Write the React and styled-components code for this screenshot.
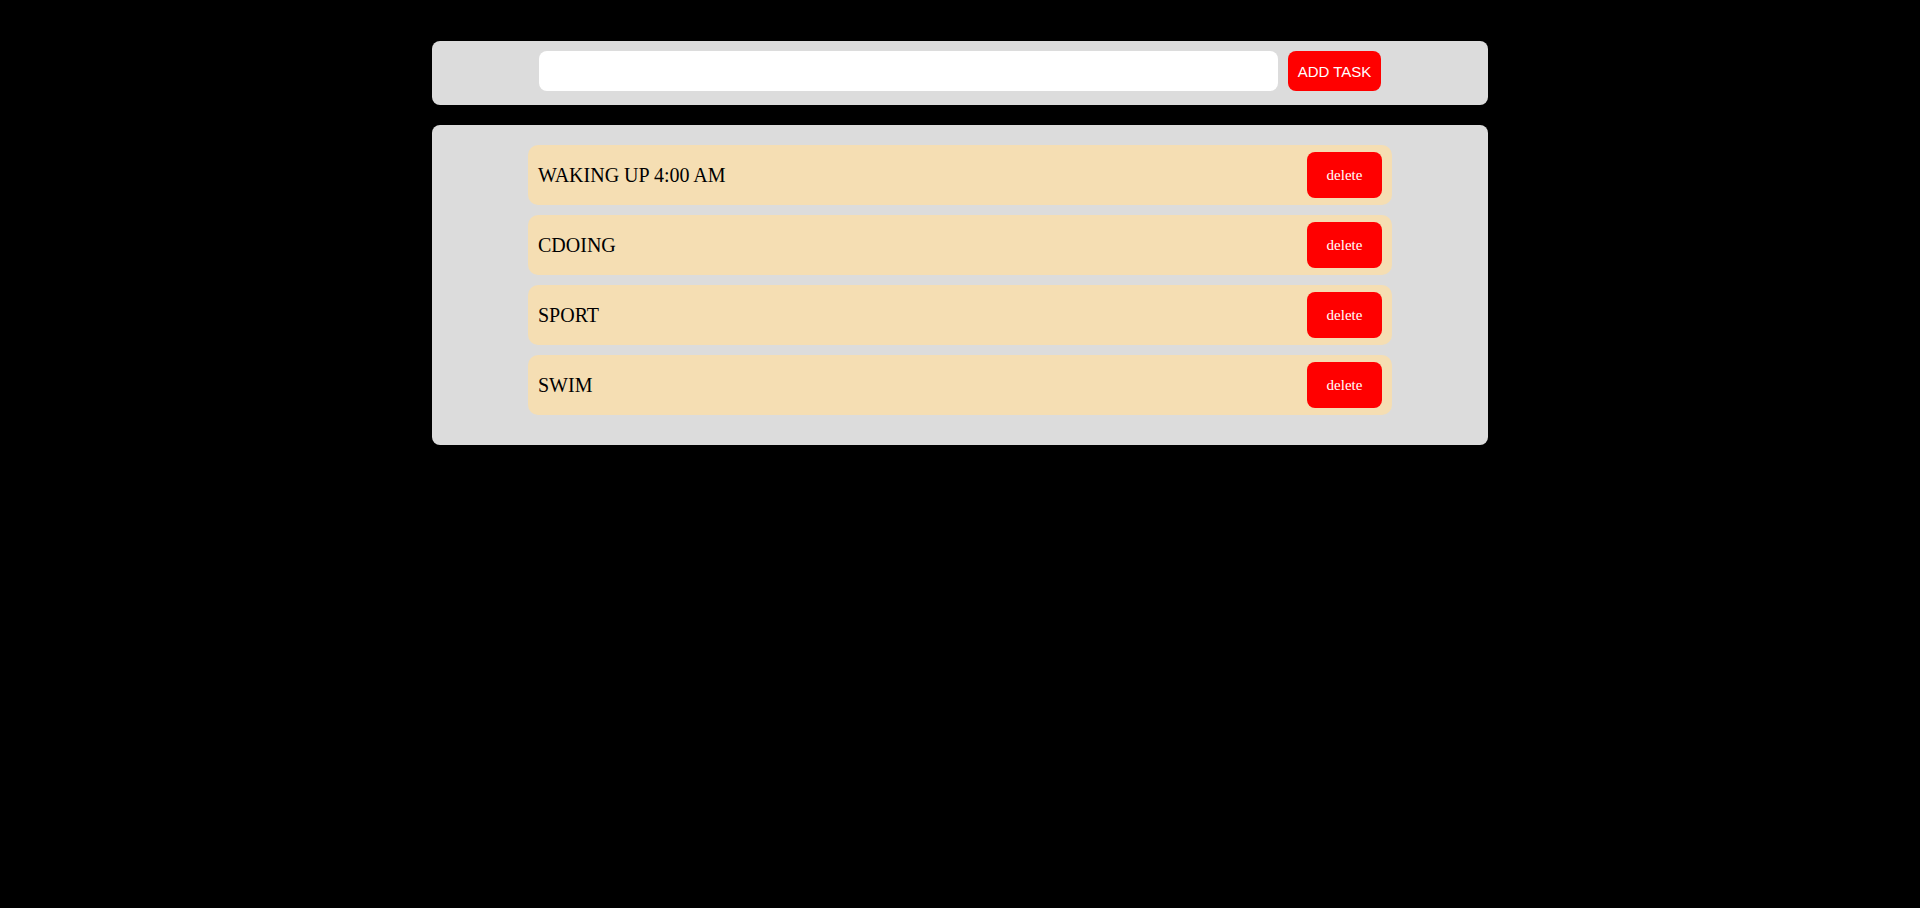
import styled, { createGlobalStyle } from "styled-components";

const GlobalStyle = createGlobalStyle`
  html, body {
    margin: 0;
    background: #000;
  }
`;

const Page = styled.div`
  width: 1056px;
  margin: 41px auto 0;
  display: flex;
  flex-direction: column;
  gap: 20px;
`;

const Panel = styled.div`
  background: #dcdcdc;
  border-radius: 8px;
  display: flex;
`;

const Form = styled(Panel)`
  justify-content: center;
  align-items: center;
  gap: 10px;
  padding: 10px 0 14px;
`;

const Input = styled.input`
  width: 739px;
  height: 40px;
  box-sizing: border-box;
  border: none;
  border-radius: 8px;
  background: #fff;
  outline: none;
  padding: 0 10px;
  font-size: 16px;
`;

const RedButton = styled.button`
  border: none;
  background: #ff0000;
  color: #fff;
  border-radius: 8px;
  cursor: pointer;
  padding: 0;
`;

const AddButton = styled(RedButton)`
  width: 93px;
  height: 40px;
  font-family: "Liberation Sans", Arial, sans-serif;
  font-size: 15px;
`;

const List = styled(Panel)`
  flex-direction: column;
  align-items: center;
  padding: 20px 0;
`;

const Item = styled.div`
  width: 864px;
  height: 60px;
  box-sizing: border-box;
  margin-bottom: 10px;
  background: #f5deb3;
  border-radius: 10px;
  display: flex;
  align-items: center;
  justify-content: space-between;
  padding: 0 10px;
`;

const Title = styled.span`
  font-family: "Liberation Serif", "Times New Roman", serif;
  font-size: 20px;
  color: #000;
`;

const DeleteButton = styled(RedButton)`
  width: 75px;
  height: 46px;
  font-family: "Liberation Serif", "Times New Roman", serif;
  font-size: 15px;
`;

const tasks = ["WAKING UP 4:00 AM", "CDOING", "SPORT", "SWIM"];

export default function App() {
  return (
    <>
      <GlobalStyle />
      <Page>
        <Form>
          <Input type="text" />
          <AddButton>ADD TASK</AddButton>
        </Form>
        <List>
          {tasks.map((t) => (
            <Item key={t}>
              <Title>{t}</Title>
              <DeleteButton>delete</DeleteButton>
            </Item>
          ))}
        </List>
      </Page>
    </>
  );
}
